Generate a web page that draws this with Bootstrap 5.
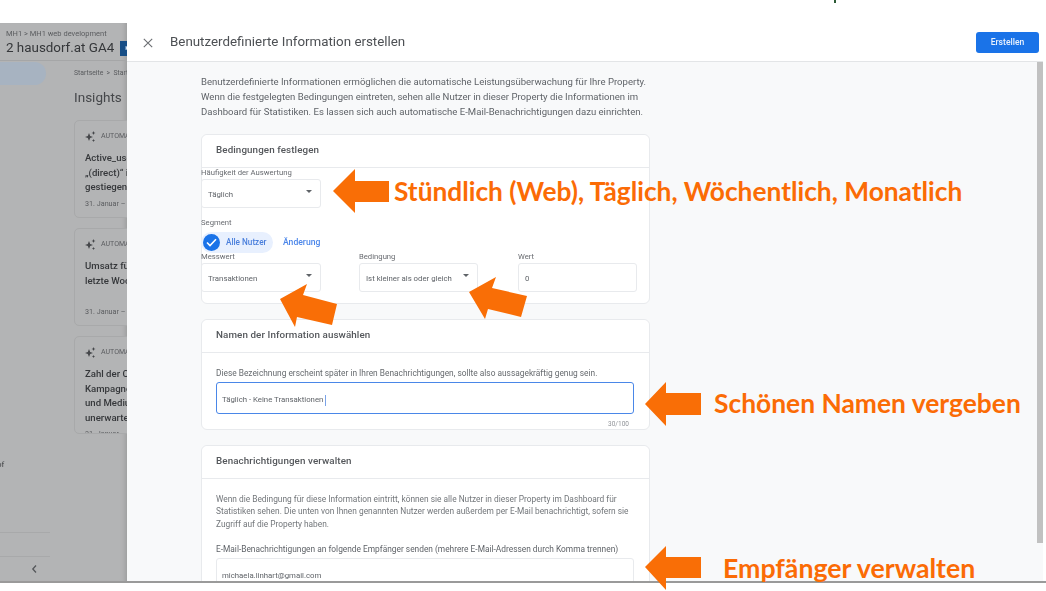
<!DOCTYPE html>
<html lang="de">
<head>
<meta charset="utf-8">
<title>Benutzerdefinierte Information erstellen</title>
<link rel="stylesheet" href="https://cdn.jsdelivr.net/npm/bootstrap@5.3.0/dist/css/bootstrap.min.css">
<style>
html,body{height:100%;overflow:hidden;background:#fff;font-family:Roboto,"Liberation Sans",sans-serif}
.stage{margin-top:23px;height:560px;border-bottom:2px solid #9a9a9a;position:relative}
.dimside{width:127px;flex:none;background:#b3b4b5;overflow:hidden;color:#3d3f42;box-shadow:inset -6px 0 6px -6px #8d8d8d;filter:blur(.35px)}
.inner-dim{width:300px}
.dimhead{height:38px;padding:6px 0 0 6px;border-bottom:1px solid #a5a6a7}
.crumb{font-size:7.5px;line-height:10px;color:#5a5c5f}
.prop{font-size:13.4px;line-height:18px;color:#35373a;display:flex;align-items:center;gap:6px}
.prop i{display:flex;width:15px;height:15px;background:#174e86;color:#cfe0f2;font-style:normal;font-size:7px;align-items:center;justify-content:center}
.dimcols{display:flex}
.navcol{width:74px;flex:none;height:520px;display:flex;flex-direction:column}
.navpill{width:46px;height:23px;margin-top:1px;background:#a7b3c1;border-radius:0 12px 12px 0;flex:none}
.of{font-size:8px;margin:374px 0 0 -3px;height:73px;color:#3d3f42;flex:none}
.navline{border-top:1px solid #a8a9aa;width:50px;height:24px;flex:none}
.navchev{padding-left:31px;height:25px;display:flex;align-items:center;flex:none}
.maincol{flex:1}
.bc{font-size:6.8px;line-height:10px;margin-top:7px;color:#585a5d;white-space:nowrap}
.insights{font-size:13.5px;line-height:18px;margin:10px 0 14px;color:#45474a}
.inscard{background:#b3b4b5;border:1px solid #a8a9aa;border-radius:5px;width:200px;height:98px;margin-bottom:10px;padding:10px 10px;overflow:hidden}
.auto{font-size:7px;display:flex;align-items:center;gap:5px;color:#5a5c5f;height:11px}
.inst{font-size:9.6px;line-height:14.5px;font-weight:500;margin-top:9px;color:#35373a;min-height:43.5px;white-space:nowrap}
.date{font-size:7.2px;color:#5a5c5f;margin-top:4px}
.drawer{flex:none;width:916px;display:flex;flex-direction:column;color:#5f6368;filter:blur(.35px)}
.dhead{height:39px;background:#fff;border-bottom:1px solid #e3e5e7;padding:1px 4px 0 16px;display:flex;align-items:center}
.dtitle{font-size:13.35px;margin-left:17px;color:#4d5054;flex:1}
.btn.makebtn{background:#1a73e8;border:0;color:#e9f1fd;font-size:8.600px;font-weight:500;width:63px;height:21px;padding:0;border-radius:3px}
.dbody{flex:1;background:#f8f9fa;display:flex;min-height:0;overflow:hidden}
.flowcol{flex:1;padding:12px 0 0 74px;min-width:0}
.sbar{width:6px;height:481px;background:#c1c1c1;flex:none}
.intro{font-size:9.55px;line-height:15px;margin-bottom:15px;white-space:nowrap}
.card.gacard{width:449px;--bs-card-border-color:#e8eaed;--bs-card-border-radius:6px;--bs-card-inner-border-radius:6px;margin-bottom:15px;background:#fff}
.card.gacard .card-header{background:#fff;height:33px;padding:0 14px 2px;display:flex;align-items:center;font-size:9.8px;font-weight:500;color:#54575b;border-bottom-color:#e8eaed;letter-spacing:.1px}
.condbody{margin-left:-1px}
.flabel{font-size:7.7px;line-height:10px;color:#686b70;margin:0;display:block}
.form-control.gabox{font-size:7.800px;color:#5f6368;border-color:#e8eaed;border-radius:3px;padding:2px 6px 0;height:29px;display:flex;align-items:center;justify-content:space-between;background:#fff;margin-top:1px;box-shadow:none}
.caret{width:0;height:0;border-left:3.5px solid transparent;border-right:3.5px solid transparent;border-top:3.5px solid #5f6368;margin:-7px 2px 0 0}
.w120{width:120px}.w119{width:119px}
.wertcol{margin-left:2px}
.chip{display:inline-flex;align-items:center;background:#e8f0fe;border-radius:11px;height:21px;width:72px;padding-left:2px;gap:6px;color:#4a7fdc;font-size:8.2px;font-weight:500}
.chkdot{width:17px;height:17px;border-radius:50%;background:#1a73e8;display:flex;align-items:center;justify-content:center}
.chg{font-size:8.6px;font-weight:500;color:#4b86ea;margin-left:10px;text-decoration:none}
.para{font-size:8.35px;line-height:12.3px;margin:0;color:#72767a;white-space:nowrap}
.form-control.gafocus{height:32px;border:1.5px solid #4a87e8;border-radius:3px;font-size:7.800px;color:#5f6368;padding:4px 5px 0;display:flex;align-items:center;margin-top:3px;box-shadow:none}
.cursorbar{display:inline-block;width:1px;height:11px;background:#7aa3e8;margin-left:2px}
.cnt{font-size:6.5px;text-align:right;color:#909398;padding-right:5px;line-height:10px;margin-top:5px}
.note{position:absolute;font-family:Lato,"Liberation Sans",sans-serif;font-weight:700;color:#fb6b05;white-space:nowrap;line-height:30px;z-index:5}
.n1{left:394px;top:153px;font-size:26.3px}
.n2{left:714px;top:365px;font-size:26.4px}
.n3{left:723px;top:530px;font-size:26.7px}
.overlay{position:absolute;left:0;top:-23px;width:1046px;height:591px;pointer-events:none;z-index:4}
.topdot{position:absolute;left:834px;top:-23px;width:2px;height:3px;background:#2c5a35}
</style>
</head>
<body>
<div class="stage d-flex">
  <div class="dimside">
    <div class="inner-dim">
      <div class="dimhead">
        <div class="crumb">MH1 &gt; MH1 web development</div>
        <div class="prop">2 hausdorf.at GA4 <i>►</i></div>
      </div>
      <div class="dimcols">
        <div class="navcol">
          <div class="navpill"></div>
          <div class="of">of</div>
          <div class="navline"></div>
          <div class="navline navchev"><svg width="7" height="10" viewBox="0 0 7 10"><path d="M5 1.5 1.8 5 5 8.500" fill="none" stroke="#55575a" stroke-width="1.300"/></svg></div>
        </div>
        <div class="maincol">
          <div class="bc">Startseite &nbsp;&gt;&nbsp; Startseite</div>
          <div class="insights">Insights</div>
          <div class="inscard">
            <div class="auto"><svg width="11" height="11" viewBox="0 0 11 11"><path d="M4 2 5.200 5 8 6 5.200 7 4 10 2.800 7 0 6 2.800 5zM8.500 0l.6 1.400L10.500 2l-1.400.6-.6 1.400-.6-1.400L6.500 2l1.400-.6zM8.500 8l.5 1 1 .5-1 .5-.5 1-.5-1-1-.5 1-.5z" fill="#45474a"/></svg>AUTOMATISCH</div>
            <div class="inst">Active_users<br>„(direct)“ ist<br>gestiegen</div>
            <div class="date">31. Januar – 1</div>
          </div>
          <div class="inscard">
            <div class="auto"><svg width="11" height="11" viewBox="0 0 11 11"><path d="M4 2 5.200 5 8 6 5.200 7 4 10 2.800 7 0 6 2.800 5zM8.500 0l.6 1.400L10.500 2l-1.400.6-.6 1.400-.6-1.400L6.500 2l1.400-.6zM8.500 8l.5 1 1 .5-1 .5-.5 1-.5-1-1-.5 1-.5z" fill="#45474a"/></svg>AUTOMATISCH</div>
            <div class="inst">Umsatz für<br>letzte Woche</div>
            <div class="date">31. Januar – 1</div>
          </div>
          <div class="inscard">
            <div class="auto"><svg width="11" height="11" viewBox="0 0 11 11"><path d="M4 2 5.200 5 8 6 5.200 7 4 10 2.800 7 0 6 2.800 5zM8.500 0l.6 1.400L10.500 2l-1.400.6-.6 1.400-.6-1.400L6.500 2l1.400-.6zM8.500 8l.5 1 1 .5-1 .5-.5 1-.5-1-1-.5 1-.5z" fill="#45474a"/></svg>AUTOMATISCH</div>
            <div class="inst">Zahl der C<br>Kampagne<br>und Medium<br>unerwartet</div>
            <div class="date">31. Januar – 1</div>
          </div>
        </div>
      </div>
    </div>
  </div>
  <div class="drawer">
    <div class="dhead">
      <svg width="10" height="10" viewBox="0 0 10 10"><path d="M.8.8l8.400 8.400M9.200.8.800 9.200" stroke="#6b6e72" stroke-width="1.100" fill="none"/></svg>
      <div class="dtitle">Benutzerdefinierte Information erstellen</div>
      <button class="btn makebtn" type="button">Erstellen</button>
    </div>
    <div class="dbody">
      <div class="flowcol">
        <div class="intro">Benutzerdefinierte Informationen ermöglichen die automatische Leistungsüberwachung für Ihre Property.<br>Wenn die festgelegten Bedingungen eintreten, sehen alle Nutzer in dieser Property die Informationen im<br>Dashboard für Statistiken. Es lassen sich auch automatische E-Mail-Benachrichtigungen dazu einrichten.</div>
        <div class="card gacard">
          <div class="card-header">Bedingungen festlegen</div>
          <div class="condbody">
            <label class="flabel">Häufigkeit der Auswertung</label>
            <div class="form-control gabox w120">Täglich<span class="caret"></span></div>
            <label class="flabel" style="margin-top:10px">Segment</label>
            <div class="d-flex align-items-center" style="margin-top:4px">
              <span class="chip"><span class="chkdot"><svg width="11" height="9" viewBox="0 0 11 9"><path d="M1 4.500 4 7.500 10 1.200" fill="none" stroke="#fff" stroke-width="1.600"/></svg></span>Alle Nutzer</span>
              <a class="chg" href="#">Änderung</a>
            </div>
            <div class="d-flex" style="gap:38px;margin-top:-1px">
              <div class="w120"><label class="flabel">Messwert</label><div class="form-control gabox">Transaktionen<span class="caret"></span></div></div>
              <div class="w119"><label class="flabel">Bedingung</label><div class="form-control gabox">Ist kleiner als oder gleich<span class="caret"></span></div></div>
              <div class="w119 wertcol"><label class="flabel">Wert</label><div class="form-control gabox">0</div></div>
            </div>
            <div style="height:11px"></div>
          </div>
        </div>
        <div class="card gacard">
          <div class="card-header">Namen der Information auswählen</div>
          <div style="padding:14px 15px 0 14px;height:76px">
            <p class="para" style="color:#666a6e">Diese Bezeichnung erscheint später in Ihren Benachrichtigungen, sollte also aussagekräftig genug sein.</p>
            <div class="form-control gafocus">Täglich - Keine Transaktionen<span class="cursorbar"></span></div>
            <div class="cnt">30/100</div>
          </div>
        </div>
        <div class="card gacard">
          <div class="card-header">Benachrichtigungen verwalten</div>
          <div style="padding:14px 15px 0 14px">
            <p class="para">Wenn die Bedingung für diese Information eintritt, können sie alle Nutzer in dieser Property im Dashboard für<br>Statistiken sehen. Die unten von Ihnen genannten Nutzer werden außerdem per E-Mail benachrichtigt, sofern sie<br>Zugriff auf die Property haben.</p>
            <p class="para" style="margin-top:13px;color:#5f6368">E-Mail-Benachrichtigungen an folgende Empfänger senden (mehrere E-Mail-Adressen durch Komma trennen)</p>
            <div class="form-control gabox" style="height:32px;margin-top:3px;padding:4px 5px 0">michaela.linhart@gmail.com</div>
          </div>
        </div>
      </div>
      <div class="sbar"></div>
    </div>
  </div>
  <span class="topdot"></span>
  <svg class="overlay" viewBox="0 0 1046 591">
    <g fill="#f96e06">
      <path d="M333 191 355 169V181H389V202H355V213Z"/>
      <path d="M645 404 666 382V393H701V415H666V426Z"/>
      <path d="M645 567 666 546V557H701V578H666V590Z"/>
      <path d="M307 284 303 295 337 304 332 325 297 317 295 327 280 299Z"/>
      <path d="M496 277 492 288 527 296 521 317 488 309 485 319 469 292Z"/>
    </g>
  </svg>
  <div class="note n1">Stündlich (Web), Täglich, Wöchentlich, Monatlich</div>
  <div class="note n2">Schönen Namen vergeben</div>
  <div class="note n3">Empfänger verwalten</div>
</div>
<script src="https://cdn.jsdelivr.net/npm/bootstrap@5.3.0/dist/js/bootstrap.bundle.min.js"></script>
</body>
</html>
